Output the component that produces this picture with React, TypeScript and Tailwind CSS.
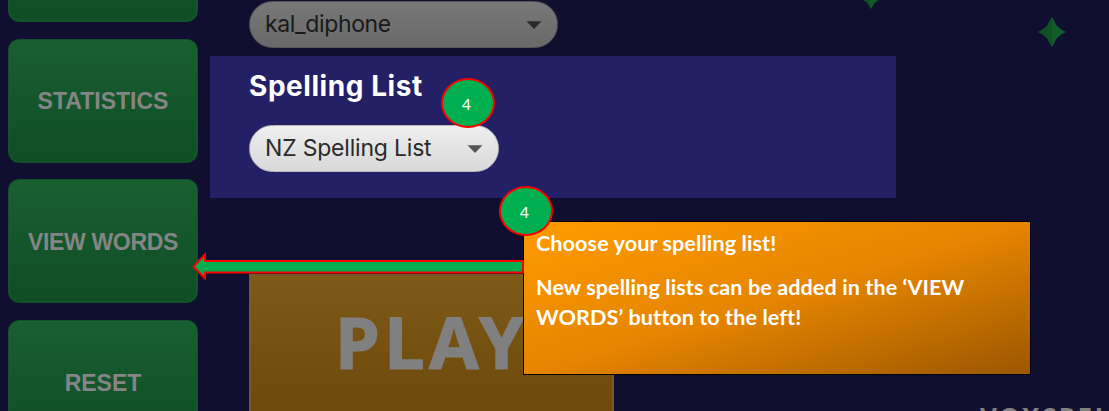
import React from "react";

const sideButtons = [
  { label: "", spacing: "" },
  { label: "STATISTICS", spacing: "" },
  { label: "VIEW WORDS", spacing: "tracking-[-0.35px]" },
  { label: "RESET", spacing: "" },
];

function SideButton({ label, spacing }: { label: string; spacing: string }) {
  return (
    <button className="flex h-[124px] w-full shrink-0 items-center justify-center rounded-[11px] border border-[#12502a] bg-linear-to-b from-[#185f30] to-[#104d25] pt-[2px] font-['Liberation_Sans',sans-serif] text-[23px] font-bold text-[#858585] shadow-[inset_0_0_2px_#1c6b38]">
      <span className={spacing}>{label}</span>
    </button>
  );
}

function Caret({ className }: { className: string }) {
  return (
    <svg width="16" height="8" viewBox="0 0 16 8" className={className}>
      <path d="M0.5 0.3H15.5L8 8Z" fill="currentColor" />
    </svg>
  );
}

function Badge({ className }: { className: string }) {
  return (
    <div
      className={`absolute flex items-center justify-center rounded-[50%] border-2 border-[#ff0000] bg-[#00b050] pt-[2px] pr-[3px] font-['Lato',sans-serif] text-[16px] leading-none text-white ${className}`}
    >
      4
    </div>
  );
}

function Star({ className }: { className: string }) {
  return (
    <svg viewBox="0 0 28 30" preserveAspectRatio="none" className={`absolute ${className}`}>
      <path d="M14 0L18.7 8.6Q21.5 12 28 15Q21.5 18 18.7 21.4L14 30L9.3 21.4Q6.5 18 0 15Q6.5 12 9.3 8.6Z" fill="#125c2b" />
      <path d="M14 0V30L9.3 21.4Q6.5 18 0 15Q6.5 12 9.3 8.6Z" fill="#105025" />
    </svg>
  );
}

export default function App() {
  return (
    <div className="relative flex h-[411px] w-[1109px] overflow-hidden bg-[#110f30]">
      <nav className="-mt-[102px] ml-[8px] flex w-[190px] shrink-0 flex-col gap-[16.6px]">
        {sideButtons.map((b, i) => (
          <SideButton key={i} label={b.label} spacing={b.spacing} />
        ))}
      </nav>

      <main className="ml-[12px] flex w-[686px] shrink-0 flex-col">
        <div className="mt-[1px] ml-[39px] flex h-[47px] w-[309px] shrink-0 items-center justify-between rounded-full border border-[#555] bg-linear-to-b from-[#787878] to-[#696969] pr-[15px] pl-[15px] font-['Inter',sans-serif] text-[23px] text-[#191919]">
          <span className="leading-none tracking-[-0.35px]">kal_diphone</span>
          <Caret className="text-[#2a2a2a]" />
        </div>

        <section className="mt-[8px] flex h-[142px] shrink-0 flex-col bg-[#242065] pt-[12px] pl-[39px]">
          <h2 className="h-[36px] font-['Inter',sans-serif] text-[28px] leading-[36px] font-bold tracking-[0.55px] text-white">
            Spelling List
          </h2>
          <div className="mt-[21px] flex h-[47px] w-[250px] shrink-0 items-center justify-between rounded-full border border-[#b8b8b8] bg-linear-to-b from-[#efefef] to-[#d8d8d8] pr-[15px] pl-[15px] font-['Inter',sans-serif] text-[23px] text-[#2b2b2b]">
            <span className="leading-none tracking-[-0.2px] whitespace-nowrap">NZ Spelling List</span>
            <Caret className="text-[#555]" />
          </div>
        </section>

        <button className="mt-[76px] ml-[39px] flex h-[160px] w-[365px] shrink-0 items-start border-2 border-[#76592a] bg-linear-to-b from-[#7e5a18] to-[#6b4708] pt-[29px] pl-[84px] font-['Noto_Sans',sans-serif] text-[72px] leading-none font-bold tracking-[4.5px] text-[#808080] [-webkit-text-stroke:1.2px_#808080]">
          <span>PLAY</span>
        </button>
      </main>

      <footer className="mt-[404px] ml-[84px] font-['Noto_Sans',sans-serif] text-[26px] leading-[26px] font-bold tracking-[2.6px] whitespace-nowrap text-[#808080]">
        VOXSPELL
      </footer>

      <Star className="top-[-11px] left-[861px] h-[20px] w-[20px]" />
      <Star className="top-[17px] left-[1038px] h-[30px] w-[28px]" />

      <aside className="absolute top-[221px] left-[523px] flex h-[154px] w-[508px] flex-col gap-[14px] border border-black bg-[linear-gradient(163deg,#ff9b00_0%,#e68500_50%,#9c5700_100%)] pt-[6px] pl-[12px] font-['Lato',sans-serif] text-[21.6px] leading-[30px] font-bold tracking-[0.08px] whitespace-nowrap text-white">
        <p>Choose your spelling list!</p>
        <p>
          New spelling lists can be added in the ‘VIEW
          <br />
          WORDS’ button to the left!
        </p>
      </aside>

      <svg className="absolute top-[252px] left-[191px]" width="334" height="30" viewBox="0 0 334 30">
        <path d="M2.5 14.5L14 2.5V9H332V20.5H14V26.5Z" fill="#00b050" stroke="#ff0000" strokeWidth="2" />
      </svg>

      <Badge className="top-[78px] left-[441px] h-[50px] w-[54px]" />
      <Badge className="top-[186px] left-[499px] h-[50px] w-[54px]" />
    </div>
  );
}
